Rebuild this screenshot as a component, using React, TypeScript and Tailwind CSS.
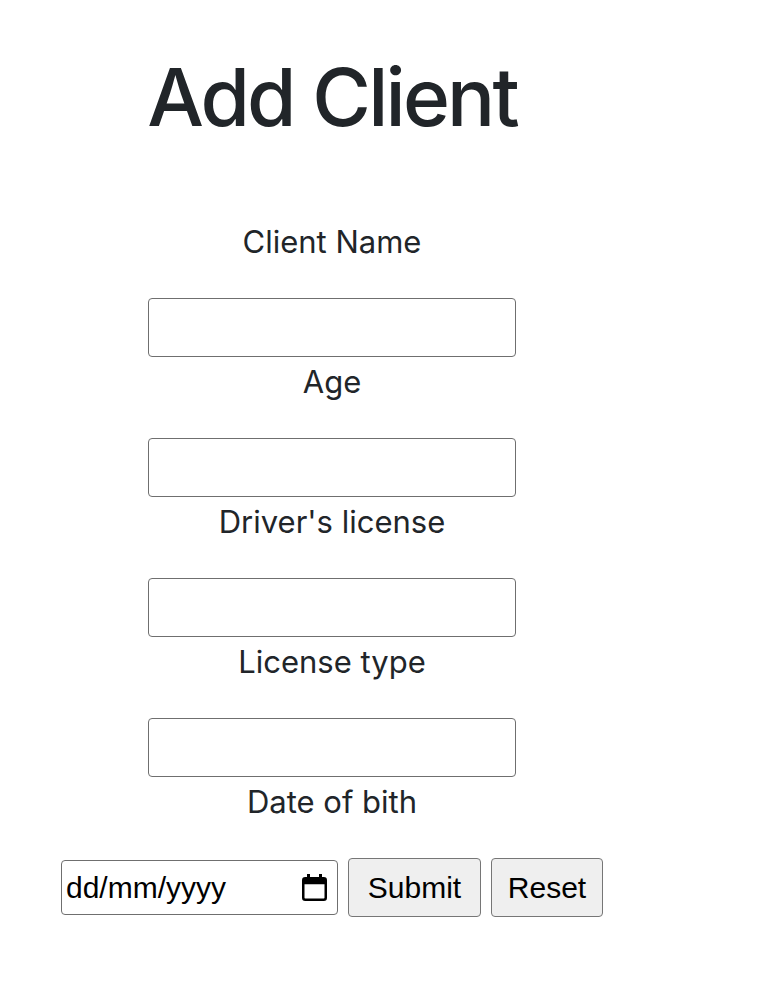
const FIELDS = ["Client Name", "Age", "Driver's license", "License type"];

function CalendarIcon() {
  return (
    <svg width="25" height="27" viewBox="0 0 25 27" aria-hidden>
      <rect x="5" y="0" width="3" height="5" fill="#000" />
      <rect x="17" y="0" width="3" height="5" fill="#000" />
      <rect x="1.25" y="4.25" width="22.5" height="21.5" rx="2" fill="none" stroke="#000" strokeWidth="2.5" />
      <rect x="1.25" y="4.25" width="22.5" height="6" fill="#000" />
    </svg>
  );
}

export default function App() {
  return (
    <div className="min-h-[1008px] bg-white pl-[148px] pt-[57px] text-[#212529] font-['Inter','Liberation_Sans',sans-serif]">
      <div className="flex w-[368px] flex-col items-center">
        <h1 className="whitespace-nowrap text-[80px] font-medium leading-none tracking-[-0.035em]">Add Client</h1>

        <form className="mt-[86px] flex w-full flex-col items-center">
          {FIELDS.map((label, i) => (
            <div key={label} className={`flex w-full flex-col items-center ${i > 0 ? "mt-[6px]" : ""}`}>
              <label className="text-[31px] leading-[37px]">{label}</label>
              <input
                type="text"
                className="mt-[38px] h-[59px] w-[368px] rounded-[4px] border-[1.5px] border-[#6f6f6f] bg-white"
              />
            </div>
          ))}
          <label className="mt-[6px] text-[31px] leading-[37px]">Date of bith</label>

          <div className="mt-[38px] flex items-center justify-center gap-[10px] font-['Liberation_Sans',Arial,sans-serif] text-black">
            <div className="flex h-[55px] w-[277px] shrink-0 items-center justify-between rounded-[4px] border-[1.5px] border-[#6f6f6f] bg-white pl-[4px] pr-[10px]">
              <span className="text-[30px] leading-none">dd/mm/yyyy</span>
              <CalendarIcon />
            </div>
            <button
              type="submit"
              className="h-[59px] w-[133px] shrink-0 rounded-[4px] border-[1.5px] border-[#767676] bg-[#efefef] text-[30px]"
            >
              Submit
            </button>
            <button
              type="reset"
              className="h-[59px] w-[112px] shrink-0 rounded-[4px] border-[1.5px] border-[#767676] bg-[#efefef] text-[30px]"
            >
              Reset
            </button>
          </div>
        </form>
      </div>
    </div>
  );
}
